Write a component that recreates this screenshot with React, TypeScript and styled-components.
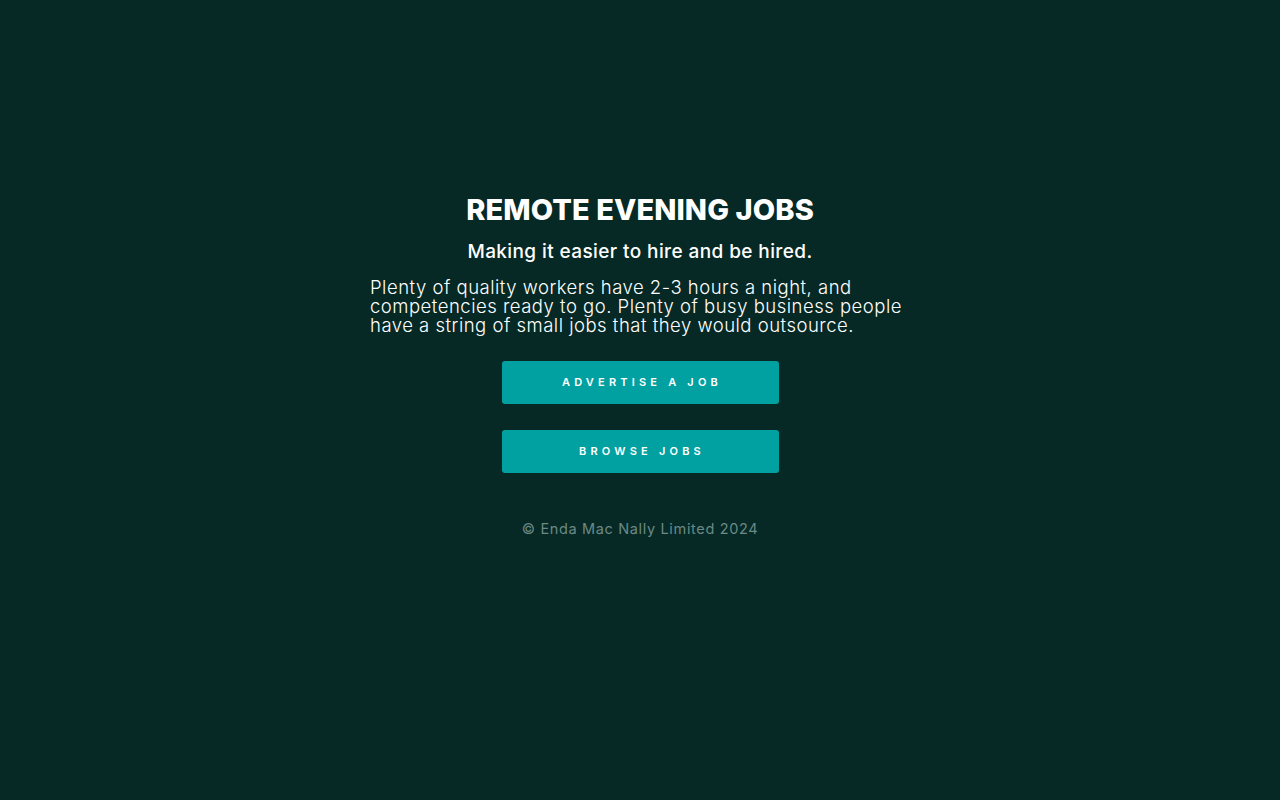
import React from "react";
import styled, { createGlobalStyle } from "styled-components";

const Global = createGlobalStyle`
  html, body { margin: 0; padding: 0; background: #062925; }
  body { font-family: Inter, "Liberation Sans", sans-serif; color: #fff; }
`;

const Page = styled.main`
  min-height: 800px;
  display: flex;
  flex-direction: column;
  align-items: center;
  padding-top: 192px;
  box-sizing: border-box;
`;

const Content = styled.section`
  width: 540px;
  display: flex;
  flex-direction: column;
  align-items: center;
`;

const Title = styled.h1`
  margin: 0;
  font-family: Inter, "Liberation Sans", sans-serif;
  font-weight: 800;
  font-size: 29px;
  line-height: 36px;
  letter-spacing: 0.1px;
  color: #fff;
`;

const Subtitle = styled.h2`
  margin: 11px 0 0;
  font-family: Inter, sans-serif;
  font-weight: 500;
  font-size: 19px;
  line-height: 26px;
  letter-spacing: 0.4px;
  color: #fff;
`;

const Lead = styled.p`
  margin: 13px 0 0;
  align-self: stretch;
  font-family: Inter, sans-serif;
  font-weight: 300;
  font-size: 18.5px;
  line-height: 19px;
  color: #fff;
  letter-spacing: 0.5px;
`;

const Actions = styled.div`
  display: flex;
  flex-direction: column;
  gap: 26px;
  margin-top: 26px;
`;

const Button = styled.a`
  width: 277px;
  height: 43px;
  display: flex;
  align-items: center;
  justify-content: center;
  background: #02a1a1;
  border-radius: 3px;
  color: #fff;
  text-decoration: none;
  font-family: Inter, sans-serif;
  font-weight: 600;
  font-size: 11px;
  letter-spacing: 4.2px;
  text-indent: 4px;
  padding-bottom: 1px;
  box-sizing: border-box;
`;

const Footer = styled.footer`
  margin-top: 47px;
  font-family: Inter, sans-serif;
  font-size: 14.5px;
  color: #6b8a85;
  letter-spacing: 0.65px;
`;

export default function App() {
  return (
    <>
      <Global />
      <Page>
        <Content>
          <Title>REMOTE EVENING JOBS</Title>
          <Subtitle>Making it easier to hire and be hired.</Subtitle>
          <Lead>
            Plenty of quality workers have 2-3 hours a night, and competencies ready to go. Plenty of busy
            business people have a string of small jobs that they would outsource.
          </Lead>
          <Actions>
            <Button href="#">ADVERTISE A JOB</Button>
            <Button href="#">BROWSE JOBS</Button>
          </Actions>
          <Footer>© Enda Mac Nally Limited 2024</Footer>
        </Content>
      </Page>
    </>
  );
}
